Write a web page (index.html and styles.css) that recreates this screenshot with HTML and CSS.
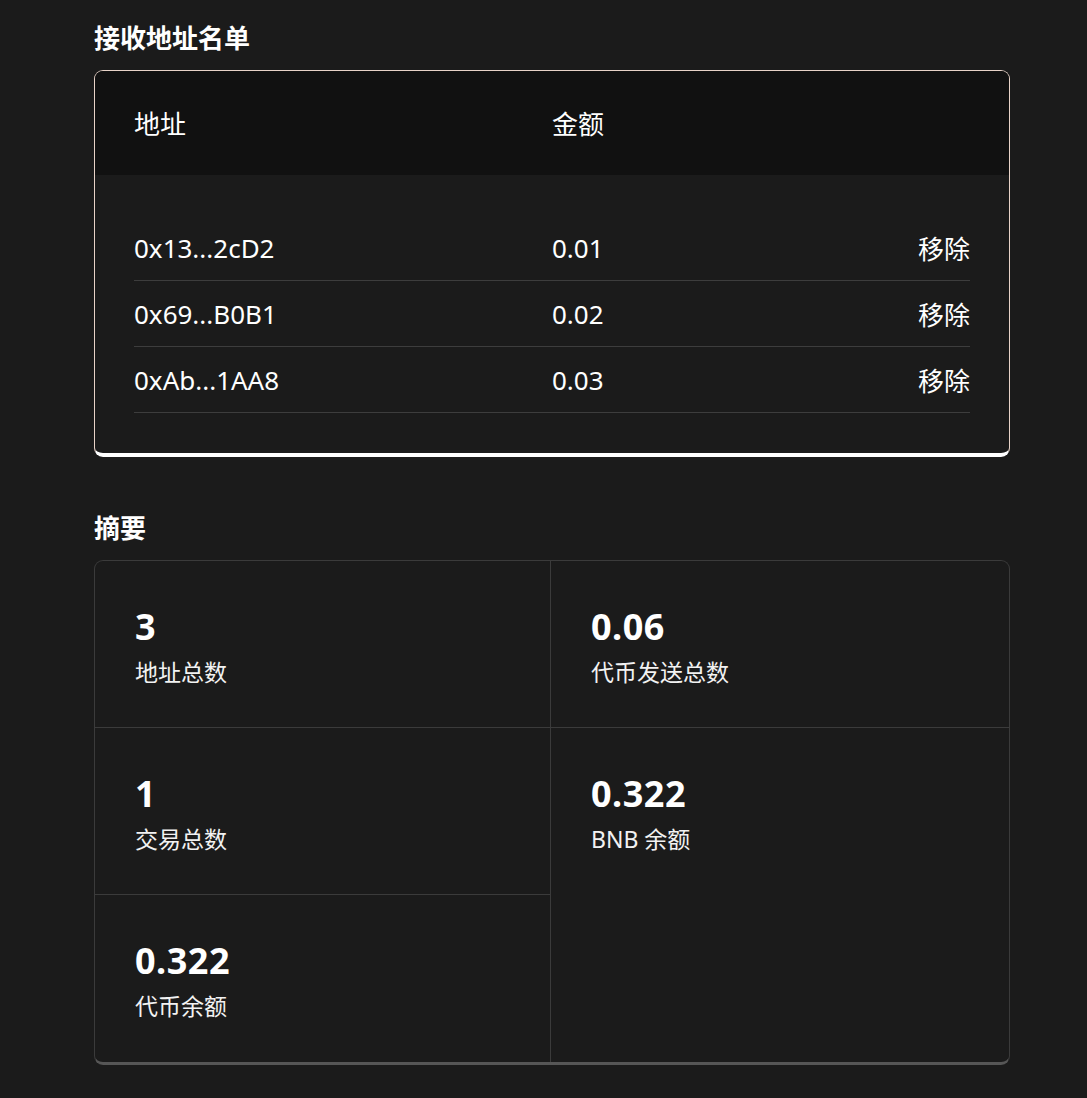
FILE: index.html
```html
<!DOCTYPE html>
<html lang="zh-CN">
<head>
<meta charset="utf-8">
<title>接收地址名单</title>
<link rel="stylesheet" href="styles.css">
</head>
<body>
<main class="page">
  <section class="section">
    <h2 class="section-title">接收地址名单</h2>
    <div class="list-card">
      <div class="list-head">
        <div class="col-addr">地址</div>
        <div class="col-amt">金额</div>
        <div class="col-act"></div>
      </div>
      <div class="list-body">
        <div class="list-row">
          <div class="col-addr">0x13...2cD2</div>
          <div class="col-amt">0.01</div>
          <div class="col-act">移除</div>
        </div>
        <div class="list-row">
          <div class="col-addr">0x69...B0B1</div>
          <div class="col-amt">0.02</div>
          <div class="col-act">移除</div>
        </div>
        <div class="list-row">
          <div class="col-addr">0xAb...1AA8</div>
          <div class="col-amt">0.03</div>
          <div class="col-act">移除</div>
        </div>
      </div>
    </div>
  </section>

  <section class="section section-summary">
    <h2 class="section-title">摘要</h2>
    <div class="summary-card">
      <div class="stat stat-left stat-line">
        <div class="stat-value">3</div>
        <div class="stat-label">地址总数</div>
      </div>
      <div class="stat stat-line">
        <div class="stat-value">0.06</div>
        <div class="stat-label">代币发送总数</div>
      </div>
      <div class="stat stat-left stat-line">
        <div class="stat-value">1</div>
        <div class="stat-label">交易总数</div>
      </div>
      <div class="stat">
        <div class="stat-value">0.322</div>
        <div class="stat-label">BNB 余额</div>
      </div>
      <div class="stat stat-left">
        <div class="stat-value">0.322</div>
        <div class="stat-label">代币余额</div>
      </div>
    </div>
  </section>
</main>
</body>
</html>
```

FILE: styles.css
```css
* {
  box-sizing: border-box;
}

html, body {
  margin: 0;
  background: #1b1b1b;
}

body {
  font-family: "Noto Sans", "Noto Sans CJK SC", sans-serif;
  color: #ffffff;
}

.page {
  width: 1087px;
  padding: 22px 77px 0 94px;
}

.section-title {
  margin: 0 0 16px;
  font-size: 26px;
  line-height: 32px;
  font-weight: 700;
  color: #ffffff;
}

.section-summary {
  margin-top: 55px;
}

/* list card */
.list-card {
  border: 1px solid #e8d3c8;
  border-bottom: 4px solid #ffffff;
  border-radius: 9px;
  overflow: hidden;
  background: #1b1b1b;
}

.list-head {
  display: flex;
  align-items: center;
  height: 104px;
  padding: 0 39px;
  background: #111111;
  font-size: 26px;
}

.list-body {
  padding: 40px 39px 40px;
}

.list-row {
  display: flex;
  align-items: center;
  height: 66px;
  border-bottom: 1px solid #3d3d3d;
  font-size: 26px;
}

.col-addr {
  width: 418px;
}

.col-amt {
  flex: 1;
}

.col-act {
  text-align: right;
}

/* summary */
.summary-card {
  display: grid;
  grid-template-columns: 456px 1fr;
  grid-auto-rows: 167px;
  border: 1px solid #3b3b3b;
  border-bottom: 3px solid #565656;
  border-radius: 9px;
  background: #1b1b1b;
}

.stat {
  padding: 44px 40px 0;
}

.stat-left {
  border-right: 1px solid #3b3b3b;
}

.stat-line {
  border-bottom: 1px solid #3b3b3b;
}

.stat-value {
  font-size: 36px;
  line-height: 44px;
  font-weight: 700;
  letter-spacing: 0.5px;
}

.stat-label {
  margin-top: 8px;
  font-size: 23px;
  line-height: 30px;
  color: #f2f2f2;
}
```
